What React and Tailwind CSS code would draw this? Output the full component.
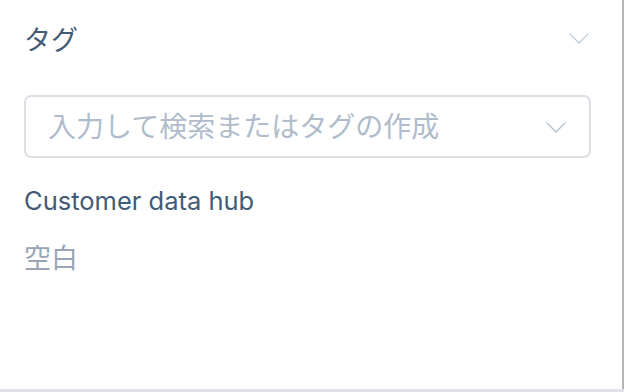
import React from 'react';

const font = { fontFamily: 'Inter, "Noto Sans CJK JP", sans-serif' };

const Chevron = ({ className }) => (
  <svg viewBox="0 0 20 11" fill="none" className={className}>
    <path d="M1 1l9 9 9-9" stroke="currentColor" strokeWidth="1.3" strokeLinecap="round" strokeLinejoin="round" />
  </svg>
);

export default function App() {
  return (
    <div className="w-[624px] h-[392px] bg-white overflow-hidden" style={font}>
      <div className="h-[389px] border-r-2 border-[#b5b5b5] flex flex-col pl-6 pr-[31px]">
        <div className="flex items-center justify-between pt-[25px] h-[55px]">
          <span className="text-[27px] leading-none text-[#425b76]">タグ</span>
          <Chevron className="w-[20px] h-[11px] text-[#bccadb] mr-[2px] -mt-[4px]" />
        </div>
        <div className="mt-[40px] h-[63px] border-2 border-[#dbdfe4] rounded-[7px] flex items-center justify-between pl-[22px] pr-[23px]">
          <span className="text-[28px] leading-none text-[#b0bccb]">入力して検索またはタグの作成</span>
          <Chevron className="w-[20px] h-[11px] text-[#b0bccb] mt-[2px]" />
        </div>
        <div className="mt-[30px] text-[25.5px] text-[#425b76] leading-none">Customer data hub</div>
        <div className="mt-[31px] text-[27px] text-[#99a5b5] leading-none">空白</div>
      </div>
      <div className="h-[3px] bg-[#dfe3e8]" />
    </div>
  );
}
